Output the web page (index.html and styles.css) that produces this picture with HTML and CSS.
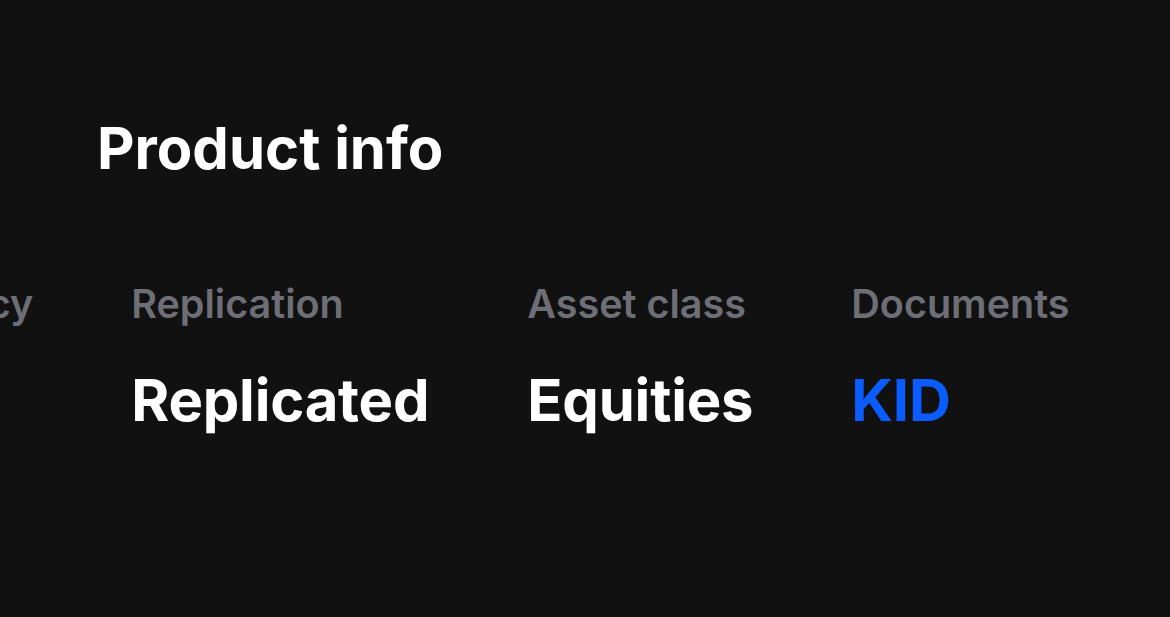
FILE: index.html
```html
<!DOCTYPE html>
<html lang="en">
<head>
    <meta charset="UTF-8">
    <meta name="viewport" content="width=device-width, initial-scale=1.0">
    <title>Product info</title>
    <link rel="stylesheet" href="styles.css">
</head>
<body>
    <section class="product-info">
        <h1>Product info</h1>
        <div class="facts">
            <div class="facts-row">
                <div class="fact">
                    <div class="fact-label">Currency</div>
                    <div class="fact-value">USD</div>
                </div>
                <div class="fact">
                    <div class="fact-label">Replication</div>
                    <div class="fact-value">Replicated</div>
                </div>
                <div class="fact">
                    <div class="fact-label">Asset class</div>
                    <div class="fact-value">Equities</div>
                </div>
                <div class="fact">
                    <div class="fact-label">Documents</div>
                    <a class="fact-value link" href="#">KID</a>
                </div>
            </div>
        </div>
    </section>
</body>
</html>
```

FILE: styles.css
```css
body {
    font-family: Inter, "Noto Sans", sans-serif;
    background-color: #111112;
    color: #fff;
    margin: 0;
    height: 100vh;
    overflow: hidden;
}
.product-info {
    padding: 108px 0 0 97px;
}
h1 {
    margin: 0;
    font-size: 58px;
    font-weight: 700;
    line-height: 80px;
}
.facts {
    margin-top: 88px;
    margin-left: -97px;
    overflow: hidden;
}
.facts-row {
    display: flex;
    gap: 98px;
    margin-left: -144px;
}
.fact {
    display: flex;
    flex-direction: column;
    flex-shrink: 0;
}
.fact-label {
    font-size: 39.5px;
    font-weight: 600;
    color: #6e6f76;
    line-height: 56px;
}
.fact-value {
    margin-top: 32px;
    font-size: 58px;
    font-weight: 700;
    letter-spacing: -0.2px;
    line-height: 72px;
    color: #fff;
    text-decoration: none;
}
.link {
    color: #0a5cff;
}
```
